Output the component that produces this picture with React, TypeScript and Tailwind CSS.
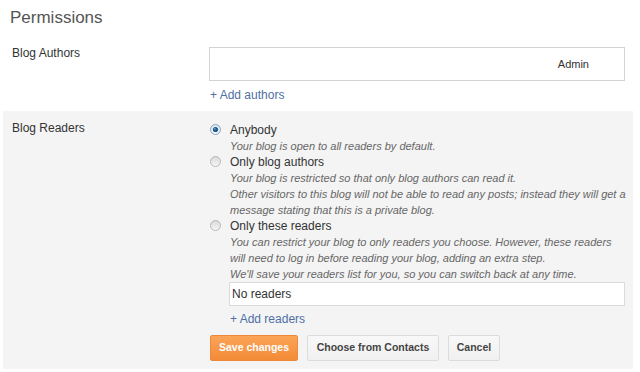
import React from "react";

function Radio({ checked }: { checked?: boolean }) {
  return (
    <svg width="11" height="11" viewBox="0 0 11 11" className="shrink-0">
      <defs>
        <linearGradient id={checked ? "rOn" : "rOff"} x1="0" y1="0" x2="0" y2="1">
          <stop offset="0" stopColor={checked ? "#d6e6f2" : "#d8d8d8"} />
          <stop offset="1" stopColor={checked ? "#f4f8fb" : "#f7f7f7"} />
        </linearGradient>
      </defs>
      <circle cx="5.5" cy="5.5" r="5" fill={`url(#${checked ? "rOn" : "rOff"})`} stroke={checked ? "#8aa4bb" : "#b8b8b8"} strokeWidth="1" />
      {checked && <circle cx="5.5" cy="5.5" r="2.6" fill="#215a86" />}
      {checked && <circle cx="4.9" cy="4.8" r="0.9" fill="#6fa0c8" />}
    </svg>
  );
}

function Option({ checked, label, lines }: { checked?: boolean; label: string; lines: string[] }) {
  return (
    <div className="flex">
      <div className="w-[21px] pl-[1px] pt-[2px]">
        <Radio checked={checked} />
      </div>
      <div>
        <div className="text-[12px] leading-[16px] text-[#333]">{label}</div>
        {lines.map((l) => (
          <div key={l} className="text-[11px] leading-[16px] italic text-[#666] whitespace-nowrap">
            {l}
          </div>
        ))}
      </div>
    </div>
  );
}

export default function App() {
  return (
    <div className="w-[640px] h-[372px] bg-white overflow-hidden font-['Liberation_Sans',Arial,sans-serif]">
      <h1 className="pl-[10px] pt-[7px] text-[17px] leading-[22px] text-[#555]">Permissions</h1>

      <div className="flex mt-[16px] pl-[12px]">
        <div className="w-[197px] text-[12px] leading-[16px] text-[#333]">Blog Authors</div>
        <div>
          <div className="mt-[2px] w-[416px] h-[34px] border border-[#d3d3d3] flex items-center justify-end pr-[35px] text-[11px] text-[#333]">
            Admin
          </div>
          <div className="mt-[6px] pl-[1px] text-[12px] leading-[16px] text-[#4f6fa5]">+ Add authors</div>
        </div>
      </div>

      <div className="mt-[8px] ml-[3px] w-[630px] bg-[#f4f4f4] flex pl-[9px] pt-[9px] pb-[8px]">
        <div className="w-[197px] text-[12px] leading-[16px] text-[#333]">Blog Readers</div>
        <div className="pt-[2px] w-[418px]">
          <Option checked label="Anybody" lines={["Your blog is open to all readers by default."]} />
          <Option
            label="Only blog authors"
            lines={[
              "Your blog is restricted so that only blog authors can read it.",
              "Other visitors to this blog will not be able to read any posts; instead they will get a",
              "message stating that this is a private blog.",
            ]}
          />
          <Option
            label="Only these readers"
            lines={[
              "You can restrict your blog to only readers you choose. However, these readers",
              "will need to log in before reading your blog, adding an extra step.",
              "We'll save your readers list for you, so you can switch back at any time.",
            ]}
          />
          <div className="ml-[20px] w-[396px] h-[24px] bg-white border border-[#dadada] flex items-center pl-[2px] text-[12px] text-[#333]">
            No readers
          </div>
          <div className="mt-[5px] ml-[21px] text-[12px] leading-[16px] text-[#4f6fa5]">+ Add readers</div>
          <div className="mt-[8px] ml-[1px] flex gap-[9px]">
            <button className="w-[88px] h-[26px] rounded-[2px] border border-[#ec8a3c] bg-linear-to-b from-[#fba458] to-[#f38b36] text-white text-[10.5px] font-bold">
              Save changes
            </button>
            <button className="w-[132px] h-[26px] rounded-[2px] border border-[#dcdcdc] bg-linear-to-b from-[#f8f8f8] to-[#f0f0f0] text-[#444] text-[10.5px] font-bold">
              Choose from Contacts
            </button>
            <button className="w-[52px] h-[26px] rounded-[2px] border border-[#dcdcdc] bg-linear-to-b from-[#f8f8f8] to-[#f0f0f0] text-[#444] text-[10.5px] font-bold">
              Cancel
            </button>
          </div>
        </div>
      </div>
    </div>
  );
}
